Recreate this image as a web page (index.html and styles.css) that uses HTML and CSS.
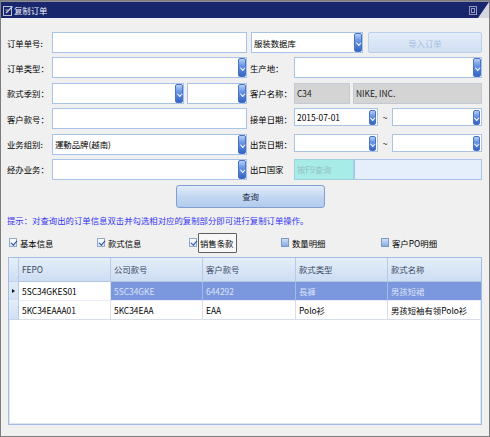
FILE: index.html
```html
<!DOCTYPE html>
<html lang="zh-CN">
<head>
<meta charset="utf-8">
<title>复制订单</title>
<link rel="stylesheet" href="styles.css">
</head>
<body>
<div class="window">
  <div class="titlebar">
    <svg class="t-icon" width="10" height="11" viewBox="0 0 10 11">
      <rect x="0.5" y="1.5" width="8" height="9" fill="none" stroke="#b9bfd0" stroke-width="1"/>
      <path d="M3 8 L9.5 1.5" stroke="#d0d4e0" stroke-width="1.2" fill="none"/>
      <path d="M2.5 5 H5" stroke="#b9bfd0" stroke-width="1"/>
    </svg>
    <span class="t-text">复制订单</span>
    <svg class="t-box" width="8" height="9" viewBox="0 0 8 9">
      <rect x="0.5" y="0.5" width="7" height="8" fill="none" stroke="#9198bb" stroke-width="1"/>
      <rect x="2.5" y="2.5" width="3" height="4" fill="none" stroke="#9198bb" stroke-width="1"/>
    </svg>
  </div>

  <div class="content">
    <div class="form">
      <label class="lbl">订单单号:</label>
      <div class="input"></div>
      <div class="row1-right">
        <div class="combo db"><span class="val">服装数据库</span><span class="arrow"></span></div>
        <div class="btn-disabled">导入订单</div>
      </div>

      <label class="lbl">订单类型：</label>
      <div class="combo"><span class="val"></span><span class="arrow"></span></div>
      <label class="lbl lbl2">生产地：</label>
      <div class="combo"><span class="val"></span><span class="arrow"></span></div>

      <label class="lbl">款式季别：</label>
      <div class="pair">
        <div class="combo season1"><span class="val"></span><span class="arrow"></span></div>
        <div class="combo season2"><span class="val"></span><span class="arrow"></span></div>
      </div>
      <label class="lbl lbl2">客户名称：</label>
      <div class="pair">
        <div class="ro code">C34</div>
        <div class="ro name">NIKE, INC.</div>
      </div>

      <label class="lbl">客户款号：</label>
      <div class="input"></div>
      <label class="lbl lbl2">接单日期：</label>
      <div class="daterange">
        <div class="combo date"><span class="val">2015-07-01</span><span class="arrow small"></span></div>
        <span class="tilde">~</span>
        <div class="combo date date2"><span class="val"></span><span class="arrow small"></span></div>
      </div>

      <label class="lbl">业务组别:</label>
      <div class="combo"><span class="val">運動品牌(越南)</span><span class="arrow"></span></div>
      <label class="lbl lbl2">出货日期：</label>
      <div class="daterange">
        <div class="combo date"><span class="val"></span><span class="arrow small"></span></div>
        <span class="tilde">~</span>
        <div class="combo date date2"><span class="val"></span><span class="arrow small"></span></div>
      </div>

      <label class="lbl">经办业务：</label>
      <div class="combo"><span class="val"></span><span class="arrow"></span></div>
      <label class="lbl lbl2">出口国家</label>
      <div class="pair">
        <div class="f9">按F9查询</div>
        <div class="f9-name"></div>
      </div>
    </div>

    <div class="query-row">
      <div class="btn-query">查询</div>
    </div>

    <p class="hint">提示：对查询出的订单信息双击并勾选相对应的复制部分即可进行复制订单操作。</p>

    <div class="checks">
      <div class="chk"><span class="box on"></span><span class="ctext">基本信息</span></div>
      <div class="chk"><span class="box on"></span><span class="ctext">款式信息</span></div>
      <div class="chk"><span class="box on"></span><span class="ctext focus">销售条款</span></div>
      <div class="chk"><span class="box"></span><span class="ctext">数量明细</span></div>
      <div class="chk"><span class="box"></span><span class="ctext">客户PO明细</span></div>
    </div>

    <div class="grid">
      <div class="g-row g-head">
        <div class="g-cell rh"></div>
        <div class="g-cell">FEPO</div>
        <div class="g-cell">公司款号</div>
        <div class="g-cell">客户款号</div>
        <div class="g-cell">款式类型</div>
        <div class="g-cell">款式名称</div>
      </div>
      <div class="g-row sel">
        <div class="g-cell rh"><span class="cur"></span></div>
        <div class="g-cell current">5SC34GKES01</div>
        <div class="g-cell">5SC34GKE</div>
        <div class="g-cell">644292</div>
        <div class="g-cell">長褲</div>
        <div class="g-cell">男孩短裙</div>
      </div>
      <div class="g-row">
        <div class="g-cell rh"></div>
        <div class="g-cell">5KC34EAAA01</div>
        <div class="g-cell">5KC34EAA</div>
        <div class="g-cell">EAA</div>
        <div class="g-cell">Polo衫</div>
        <div class="g-cell">男孩短袖有领Polo衫</div>
      </div>
    </div>
  </div>
</div>
</body>
</html>
```

FILE: styles.css
```css
* { box-sizing: border-box; }

html, body {
  margin: 0;
  padding: 0;
}

body {
  width: 490px;
  height: 437px;
  overflow: hidden;
  background: #f0f0f0;
  font-family: "Noto Sans CJK SC", "Noto Sans", sans-serif;
  font-size: 8.4px;
  color: #000;
}

.window {
  width: 490px;
  height: 437px;
  border: 1px solid #7c7c7c;
  background: #f0f0f0;
  display: flex;
  flex-direction: column;
}

/* title bar */
.titlebar {
  position: relative;
  height: 17px;
  flex: none;
  background: #18276d;
  display: flex;
  align-items: center;
  border-top: 1px solid #8e8e9a;
}

/* window resize corner drawn over the bar's right end */
.titlebar::after {
  content: "";
  position: absolute;
  right: 0;
  bottom: 0;
  width: 0;
  height: 0;
  border-left: 11px solid transparent;
  border-bottom: 16px solid #d3d6df;
}

.t-icon { margin-left: 2px; flex: none; }

.t-text {
  margin-left: 1px;
  color: #eef0f8;
  line-height: 16px;
}

.t-box { margin-left: auto; margin-right: 12px; flex: none; }

/* content */
.content {
  padding: 14px 7px 0 6px;
  display: flex;
  flex-direction: column;
}

.form {
  display: grid;
  grid-template-columns: 45px 195px 47px 188px;
  grid-auto-rows: 21px;
  row-gap: 4.4px;
}

.lbl {
  display: flex;
  align-items: center;
  white-space: nowrap;
}

.lbl2 { padding-left: 3px; }

.input {
  border: 1px solid #a9c2e8;
  background: #fff;
}

.combo {
  display: flex;
  align-items: center;
  border: 1px solid #a9c2e8;
  background: #fff;
  padding-left: 2px;
  min-width: 0;
}

.combo .val {
  flex: 1;
  white-space: nowrap;
  overflow: hidden;
}

.arrow {
  position: relative;
  flex: none;
  width: 8px;
  height: 19px;
  border-radius: 2px;
  background: linear-gradient(#b6d0f6 0%, #6f9be6 35%, #3465c7 100%);
  border: 1px solid #4a73c2;
}

.arrow::after {
  content: "";
  position: absolute;
  left: 1.5px;
  top: 7px;
  width: 2.5px;
  height: 2.5px;
  border-right: 1.2px solid #fff;
  border-bottom: 1.2px solid #fff;
  transform: rotate(45deg);
}

.arrow.small {
  width: 7px;
  height: 15px;
  align-self: flex-start;
  margin-top: 1px;
  margin-right: 1px;
}

.arrow.small::after { left: 1px; top: 5px; }

.row1-right {
  grid-column: 3 / 5;
  display: flex;
  gap: 5px;
  padding-left: 4px;
}

.combo.db { width: 112px; flex: none; }

.btn-disabled {
  flex: 1;
  display: flex;
  align-items: center;
  justify-content: center;
  border: 1px solid #bccfea;
  border-radius: 2px;
  background: linear-gradient(#e4edf9, #d0dff3);
  color: #a7bedf;
}

.pair {
  display: flex;
  gap: 3px;
}

.season1 { width: 132px; flex: none; }
.season2 { flex: 1; }

.ro {
  display: flex;
  align-items: center;
  padding-left: 2px;
  background: #d4d4d4;
  border: 1px solid #c3cad6;
  color: #222;
}

.ro.code { width: 56px; flex: none; }
.ro.name { flex: 1; }

.daterange {
  display: flex;
  align-items: flex-start;
}

.combo.date {
  width: 84px;
  height: 18px;
  flex: none;
}

.combo.date2 { flex: 1; width: auto; }

.tilde {
  width: 14px;
  flex: none;
  text-align: center;
  line-height: 18px;
}

.f9 {
  width: 60px;
  flex: none;
  display: flex;
  align-items: center;
  padding-left: 2px;
  background: #a8ece7;
  border: 1px solid #9fd2e0;
  color: #93c0c6;
}

.pair .f9 + .f9-name { margin-left: -3px; }

.f9-name {
  flex: 1;
  background: #e5effc;
  border: 1px solid #a9c2e8;
}

/* query */
.query-row {
  display: flex;
  margin-top: 5px;
  padding-left: 169px;
}

.btn-query {
  width: 149px;
  height: 23px;
  display: flex;
  align-items: center;
  justify-content: center;
  border: 1px solid #7f9fd2;
  border-radius: 3px;
  background: linear-gradient(#e3edf9, #c3d7f2 50%, #b2cbed);
  color: #1d2c4c;
}

.hint {
  margin: 6px 0 0 0;
  line-height: 12px;
  color: #3535f3;
  white-space: nowrap;
}

/* checkboxes */
.checks {
  display: grid;
  grid-template-columns: 88px 92px 92px 100px 1fr;
  height: 20px;
  margin-top: 7px;
  padding-left: 2px;
}

.chk {
  display: flex;
  align-items: center;
}

.box {
  width: 8px;
  height: 9px;
  flex: none;
  border: 1px solid #7b98c8;
  background: linear-gradient(#cfe0f6, #87abdf);
  position: relative;
}

.box.on {
  background: linear-gradient(#ffffff, #dce6f3);
  border-color: #8ea8cf;
}

.box.on::after {
  content: "";
  position: absolute;
  left: 1.5px;
  top: 0px;
  width: 2.5px;
  height: 5px;
  border-right: 1.3px solid #2a4fa0;
  border-bottom: 1.3px solid #2a4fa0;
  transform: rotate(40deg);
}

.ctext {
  margin-left: 1px;
  padding: 0 1px;
  border: 1px solid transparent;
  height: 20px;
  display: flex;
  align-items: center;
  white-space: nowrap;
}

.ctext.focus {
  border-color: #5f5f5f;
  border-radius: 1px;
  background: #f8f8f8;
  padding: 0 2px 0 1px;
}

/* data grid */
.grid {
  margin-top: 4px;
  margin-left: 1px;
  width: 474px;
  height: 168px;
  border: 1px solid #a2bce3;
  box-shadow: inset 0 0 0 1px #dbe6f5;
  background: #fff;
}

.g-row {
  display: grid;
  grid-template-columns: 10px 92px 92px 93px 92px 1fr;
  height: 19px;
}

.g-cell {
  display: flex;
  align-items: center;
  padding-left: 3px;
  border-right: 1px solid #d9dfe8;
  border-bottom: 1px solid #d9dfe8;
  white-space: nowrap;
  overflow: hidden;
}

.g-cell:last-child { border-right: none; }

.g-head {
  height: 24px;
  background: linear-gradient(#e6effa, #cbdcf2);
}

.g-head .g-cell {
  color: #3a4862;
  border-right: 1px solid #b8cbe6;
  border-bottom: 1px solid #b3c7e4;
}

.g-head .g-cell:last-child { border-right: none; }

.g-cell.rh {
  padding-left: 0;
  background: linear-gradient(#e2ecf8, #d2e0f3);
  border-right: 1px solid #b8cbe6;
  border-bottom: 1px solid #c4d4ea;
}

.g-head .g-cell.rh { background: transparent; }

.cur {
  margin-left: 3px;
  width: 0;
  height: 0;
  border-top: 2.5px solid transparent;
  border-bottom: 2.5px solid transparent;
  border-left: 3px solid #111;
}

.sel .g-cell {
  background: #7b97dd;
  color: #dce4fb;
  border-right-color: #a6b8e6;
  border-bottom-color: #e8edf8;
}

.sel .g-cell.rh {
  background: linear-gradient(#e2ecf8, #d2e0f3);
  border-right-color: #b8cbe6;
}

.sel .g-cell.current {
  background: #fff;
  color: #000;
  border-right-color: #d9dfe8;
}
```
